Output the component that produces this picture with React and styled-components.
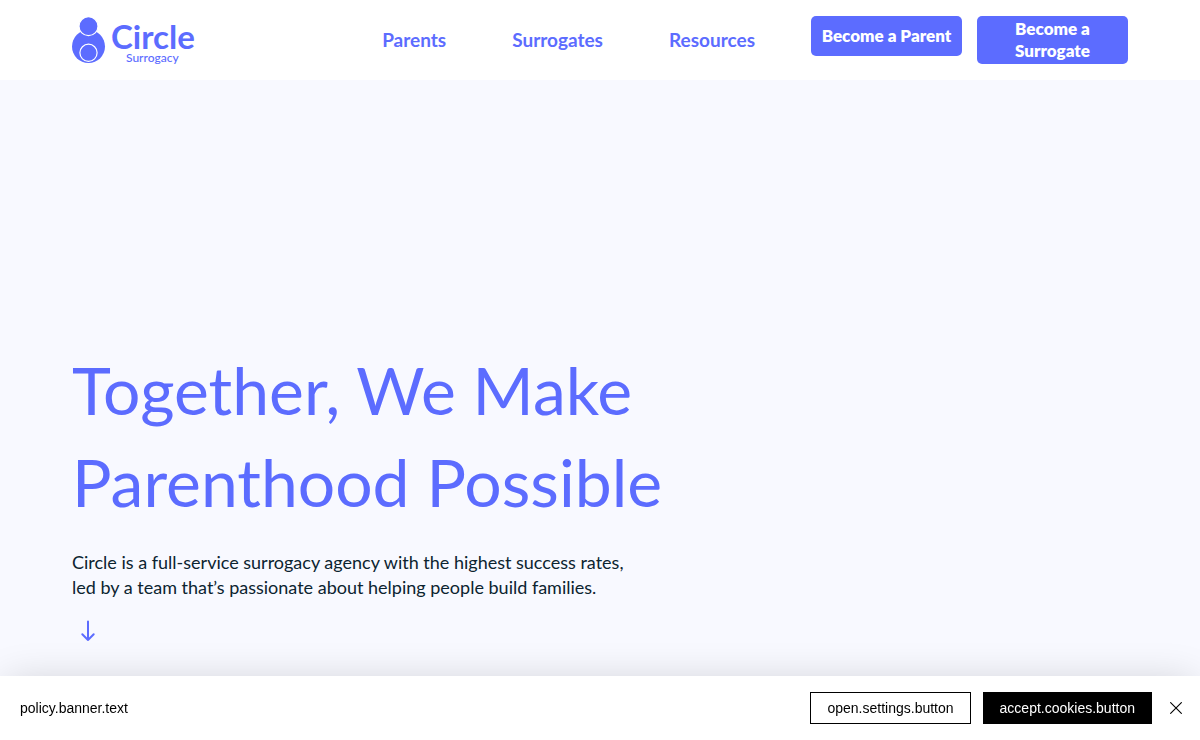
import React from "react";
import styled, { createGlobalStyle } from "styled-components";

const GlobalStyle = createGlobalStyle`
  *, *::before, *::after { box-sizing: border-box; }
  body {
    margin: 0;
    background: #f8f9ff;
    color: #0c2430;
    font-family: Lato, sans-serif;
  }
`;

const Page = styled.div`
  display: flex;
  flex-direction: column;
  min-height: 100vh;
`;

const Header = styled.header`
  display: flex;
  justify-content: space-between;
  height: 80px;
  padding: 16px 6%;
  background: #fff;
`;

const Logo = styled.a`
  display: flex;
  gap: 5px;
  height: 48px;
  color: #5c6cff;
  text-decoration: none;
`;

const LogoWords = styled.span`
  display: flex;
  flex-direction: column;
  align-items: flex-start;
  padding-top: 4px;
`;

const LogoName = styled.span`
  font: 700 33px/32px Lato, sans-serif;
`;

const LogoTag = styled.span`
  padding-left: 15px;
  font: 500 12px/12px Lato, sans-serif;
`;

const HeaderRight = styled.div`
  display: flex;
  align-items: flex-start;
  gap: 56px;
`;

const Nav = styled.nav`
  display: flex;
  gap: 66px;
`;

const NavLink = styled.a`
  color: #5c6cff;
  font-size: 19px;
  font-weight: 700;
  line-height: 48px;
  text-decoration: none;
`;

const Actions = styled.div`
  display: flex;
  align-items: flex-start;
  gap: 15px;
`;

const ActionLink = styled.a`
  display: flex;
  align-items: center;
  justify-content: center;
  width: 151px;
  min-height: 40px;
  padding: 2px 8px;
  border-radius: 5px;
  background: #5c6cff;
  color: #fff;
  font-size: 17px;
  font-weight: 800;
  line-height: 22px;
  text-align: center;
  text-decoration: none;
`;

const Hero = styled.main`
  display: flex;
  flex: 1;
  flex-direction: column;
  justify-content: flex-end;
  align-items: flex-start;
  padding: 64px 6% 93px;
`;

const Title = styled.h1`
  max-width: 640px;
  margin: 0;
  color: #5c6cff;
  font-size: 66px;
  font-weight: 400;
  line-height: 92px;
`;

const Lead = styled.p`
  max-width: 620px;
  margin: 22px 0 15px;
  font-size: 18px;
  line-height: 25px;
`;

const DownLink = styled.a`
  display: flex;
  width: 32px;
  height: 32px;
  align-items: center;
  justify-content: center;
  color: #5c6cff;
`;

const Banner = styled.section`
  position: fixed;
  right: 0;
  bottom: 0;
  left: 0;
  display: flex;
  align-items: center;
  gap: 12px;
  height: 64px;
  padding: 0 12px 0 20px;
  background: #fff;
  box-shadow: 0 0 40px -6px rgba(0, 0, 0, 0.18);
  color: #000;
  font: 14px/20px "Liberation Sans", Arial, sans-serif;
`;

const BannerText = styled.p`
  flex: 1;
  margin: 0;
`;

const BannerButton = styled.button`
  height: 32px;
  padding: 0 16px;
  border: 1px solid #000;
  background: ${({ $solid }) => ($solid ? "#000" : "#fff")};
  color: ${({ $solid }) => ($solid ? "#fff" : "#000")};
  font: inherit;
`;

const CloseButton = styled.button`
  display: flex;
  align-items: center;
  justify-content: center;
  width: 24px;
  height: 24px;
  padding: 0;
  border: 0;
  background: none;
  color: #000;
`;

export default function App() {
  return (
    <Page>
      <GlobalStyle />
      <Header>
        <Logo href="#" aria-label="Circle Surrogacy">
          <svg width="34" height="48" viewBox="0 0 34 48" aria-hidden="true">
            <circle cx="16.5" cy="30.5" r="16.5" fill="#5c6cff" />
            <circle cx="16.5" cy="10.2" r="9.5" fill="#5c6cff" stroke="#fff" strokeWidth="1.2" />
            <circle cx="16.5" cy="36.8" r="8.6" fill="none" stroke="#fff" strokeWidth="1.2" />
          </svg>
          <LogoWords>
            <LogoName>Circle</LogoName>
            <LogoTag>Surrogacy</LogoTag>
          </LogoWords>
        </Logo>
        <HeaderRight>
          <Nav aria-label="Main">
            <NavLink href="#">Parents</NavLink>
            <NavLink href="#">Surrogates</NavLink>
            <NavLink href="#">Resources</NavLink>
          </Nav>
          <Actions>
            <ActionLink href="#">Become a Parent</ActionLink>
            <ActionLink href="#">
              Become a<br />Surrogate
            </ActionLink>
          </Actions>
        </HeaderRight>
      </Header>
      <Hero>
        <Title>Together, We Make Parenthood Possible</Title>
        <Lead>
          Circle is a full-service surrogacy agency with the highest success rates,
          <br />
          led by a team that’s passionate about helping people build families.
        </Lead>
        <DownLink href="#" aria-label="Scroll down">
          <svg width="16" height="22" viewBox="0 0 16 22" fill="none" stroke="currentColor" strokeWidth="2" strokeLinecap="round" strokeLinejoin="round" aria-hidden="true">
            <path d="M8 1.5V20M2.300 14.300L8 20l5.700-5.700" />
          </svg>
        </DownLink>
      </Hero>
      <Banner aria-label="Cookie policy">
        <BannerText>policy.banner.text</BannerText>
        <BannerButton type="button">open.settings.button</BannerButton>
        <BannerButton type="button" $solid>accept.cookies.button</BannerButton>
        <CloseButton type="button" aria-label="Close">
          <svg width="12" height="12" viewBox="0 0 12 12" stroke="currentColor" strokeWidth="1.1" aria-hidden="true">
            <path d="M0.300 0.300L11.700 11.700M11.700 0.300L0.300 11.700" />
          </svg>
        </CloseButton>
      </Banner>
    </Page>
  );
}
